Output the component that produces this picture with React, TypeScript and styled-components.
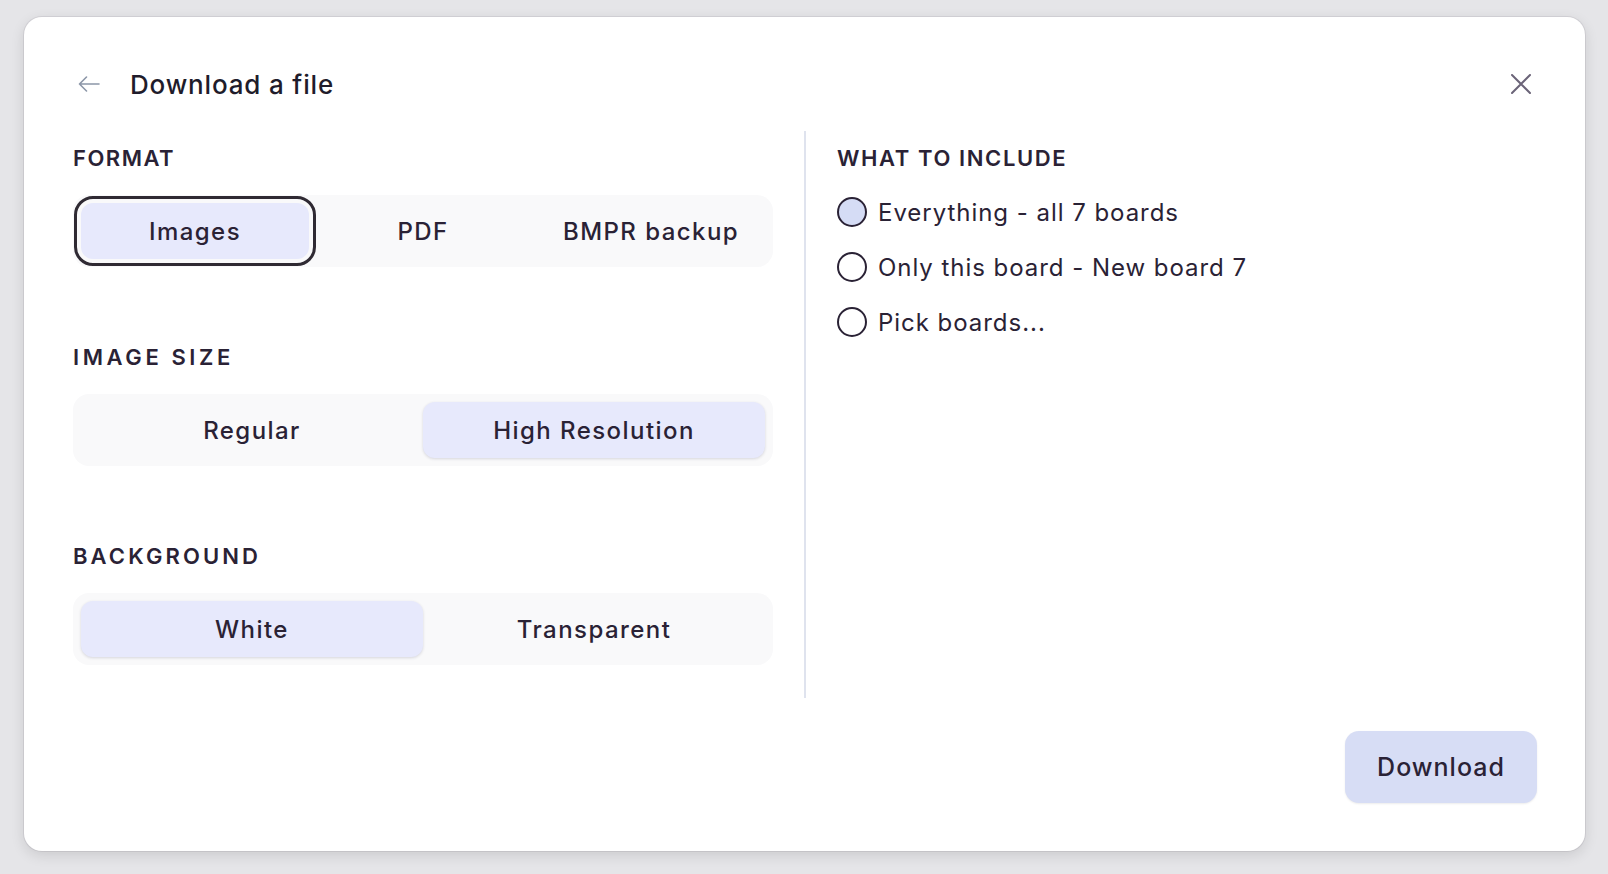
import React, { useState } from "react";
import styled, { createGlobalStyle, css } from "styled-components";

const GlobalStyle = createGlobalStyle`
  html, body {
    margin: 0;
    padding: 0;
    background: #e5e5e8;
    font-family: Inter, "Noto Sans", "Liberation Sans", sans-serif;
    color: #2a2235;
  }
  * {
    box-sizing: border-box;
  }
`;

const Page = styled.div`
  height: 874px;
  padding: 17px 23px 23px 24px;
`;

const Card = styled.div`
  display: flex;
  flex-direction: column;
  height: 100%;
  padding: 40px 48px 48px 49px;
  background: #ffffff;
  border-radius: 18px;
  box-shadow: 0 0 0 1px rgba(40, 30, 50, 0.08), 0 4px 14px rgba(0, 0, 0, 0.12);
`;

const Header = styled.div`
  display: flex;
  align-items: center;
  height: 54px;
`;

const IconButton = styled.button`
  display: flex;
  align-items: center;
  justify-content: center;
  padding: 0;
  border: none;
  background: transparent;
  cursor: pointer;
`;

const BackButton = styled(IconButton)`
  margin-left: 5px;
  margin-right: 30px;
`;

const CloseButton = styled(IconButton)`
  margin-left: auto;
  margin-right: 6px;
`;

const Title = styled.h1`
  margin: 0;
  font-size: 26px;
  font-weight: 500;
  letter-spacing: 0.032em;
  color: #1f1c2b;
`;

const Body = styled.div`
  display: grid;
  grid-template-columns: 700px 2px 1fr;
  column-gap: 31px;
  margin-top: 20px;
  height: 567px;
`;

const Column = styled.div`
  display: flex;
  flex-direction: column;
  padding-top: 14px;
`;

const Divider = styled.div`
  background: #dfe3ee;
`;

const Label = styled.div<{ $spacing: number }>`
  font-size: 22px;
  line-height: 26px;
  font-weight: 600;
  letter-spacing: ${(p) => p.$spacing}px;
  color: #2a2235;
`;

const Section = styled.div`
  display: flex;
  flex-direction: column;
  gap: 24px;
  & + & {
    margin-top: 77px;
  }
`;

const Segmented = styled.div<{ $count: number }>`
  display: grid;
  grid-template-columns: repeat(${(p) => p.$count}, 1fr);
  padding: 8px;
  background: #f9f9fa;
  border-radius: 16px;
`;

const Option = styled.button<{ $active: boolean; $focused?: boolean }>`
  height: 56px;
  border: none;
  border-radius: 12px;
  background: transparent;
  font-family: inherit;
  font-size: 24px;
  font-weight: 500;
  letter-spacing: 0.06em;
  color: #2a2235;
  cursor: pointer;
  ${(p) =>
    p.$active &&
    css`
      background: #e7e9fc;
      box-shadow: 0 1px 3px rgba(30, 30, 60, 0.16);
    `}
  ${(p) =>
    p.$focused &&
    css`
      box-shadow: none;
      outline: 3px solid #2f2a33;
      outline-offset: 4px;
    `}
`;

const RadioList = styled.div`
  display: flex;
  flex-direction: column;
  gap: 25px;
  margin-top: 26px;
`;

const RadioRow = styled.label`
  display: flex;
  align-items: center;
  gap: 11px;
  height: 30px;
  font-size: 24px;
  letter-spacing: 0.04em;
  color: #2a2235;
  cursor: pointer;
`;

const RadioCircle = styled.span<{ $checked: boolean }>`
  flex: none;
  width: 30px;
  height: 30px;
  border-radius: 50%;
  border: 2px solid #2a2235;
  background: ${(p) => (p.$checked ? "#d5dcf5" : "#ffffff")};
`;

const Footer = styled.div`
  display: flex;
  justify-content: flex-end;
  margin-top: auto;
`;

const PrimaryButton = styled.button`
  width: 192px;
  height: 72px;
  border: none;
  border-radius: 14px;
  background: #d7ddf5;
  font-family: inherit;
  font-size: 25px;
  font-weight: 500;
  letter-spacing: 0.04em;
  color: #2a2235;
  box-shadow: 0 1px 2px rgba(0, 0, 0, 0.08);
  cursor: pointer;
`;

const ArrowLeft = () => (
  <svg width="22" height="16" viewBox="0 0 22 16" fill="none">
    <path
      d="M21 8H1.5M8.5 1L1.5 8l7 7"
      stroke="#8c96a8"
      strokeWidth="1.6"
      strokeLinecap="round"
      strokeLinejoin="round"
    />
  </svg>
);

const CloseIcon = () => (
  <svg width="20" height="20" viewBox="0 0 20 20" fill="none">
    <path d="M1 1l18 18M19 1L1 19" stroke="#6b6478" strokeWidth="2" strokeLinecap="round" />
  </svg>
);

interface SegmentProps {
  options: string[];
  value: string;
  focused?: boolean;
  onChange: (v: string) => void;
}

function Segment({ options, value, focused, onChange }: SegmentProps) {
  return (
    <Segmented $count={options.length}>
      {options.map((o) => (
        <Option
          key={o}
          $active={o === value}
          $focused={focused && o === value}
          onClick={() => onChange(o)}
        >
          {o}
        </Option>
      ))}
    </Segmented>
  );
}

const includeOptions = ["Everything - all 7 boards", "Only this board - New board 7", "Pick boards..."];

export default function App() {
  const [format, setFormat] = useState("Images");
  const [size, setSize] = useState("High Resolution");
  const [bg, setBg] = useState("White");
  const [include, setInclude] = useState(includeOptions[0]);

  return (
    <>
      <GlobalStyle />
      <Page>
        <Card>
          <Header>
            <BackButton aria-label="Back">
              <ArrowLeft />
            </BackButton>
            <Title>Download a file</Title>
            <CloseButton aria-label="Close">
              <CloseIcon />
            </CloseButton>
          </Header>

          <Body>
            <Column>
              <Section>
                <Label $spacing={1.5}>FORMAT</Label>
                <Segment
                  options={["Images", "PDF", "BMPR backup"]}
                  value={format}
                  focused
                  onChange={setFormat}
                />
              </Section>
              <Section>
                <Label $spacing={3.6}>IMAGE SIZE</Label>
                <Segment options={["Regular", "High Resolution"]} value={size} onChange={setSize} />
              </Section>
              <Section>
                <Label $spacing={3.1}>BACKGROUND</Label>
                <Segment options={["White", "Transparent"]} value={bg} onChange={setBg} />
              </Section>
            </Column>

            <Divider />

            <Column>
              <Label $spacing={1.6}>WHAT TO INCLUDE</Label>
              <RadioList>
                {includeOptions.map((o) => (
                  <RadioRow key={o} onClick={() => setInclude(o)}>
                    <RadioCircle $checked={include === o} />
                    {o}
                  </RadioRow>
                ))}
              </RadioList>
            </Column>
          </Body>

          <Footer>
            <PrimaryButton>Download</PrimaryButton>
          </Footer>
        </Card>
      </Page>
    </>
  );
}
